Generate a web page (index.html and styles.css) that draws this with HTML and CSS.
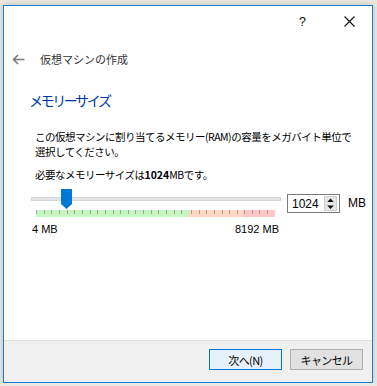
FILE: index.html
```html
<!DOCTYPE html>
<html lang="ja">
<head>
    <meta charset="UTF-8">
    <title>仮想マシンの作成</title>
    <link rel="stylesheet" href="styles.css">
</head>
<body>
    <div class="window">
        <div class="titlebar">
            <span class="help">?</span>
            <svg class="close" width="11" height="11" viewBox="0 0 11 11"><path d="M0.5 0.5 L10.5 10.5 M10.5 0.5 L0.5 10.5" stroke="#111" stroke-width="1.1" fill="none"/></svg>
        </div>
        <div class="nav">
            <svg class="back" width="13" height="11" viewBox="0 0 13 11"><path d="M12.5 5.5 H1.5 M6 1 L1.5 5.5 L6 10" stroke="#7a7a7a" stroke-width="1.6" fill="none"/></svg>
            <span class="nav-title">仮想マシンの作成</span>
        </div>
        <div class="content">
            <h1 class="heading">メモリーサイズ</h1>
            <p class="desc">この仮想マシンに割り当てるメモリー(RAM)の容量をメガバイト単位で<br>選択してください。</p>
            <p class="need">必要なメモリーサイズは<b>1024</b>MBです。</p>
            <div class="slider-row">
                <div class="slider">
                    <div class="track-wrap">
                        <div class="track"></div>
                        <svg class="thumb" width="11" height="20" viewBox="0 0 11 20"><path d="M0 0 H11 V15 L5.5 20 L0 15 Z" fill="#0078d7"/></svg>
                    </div>
                    <div class="ticks">
                        <div class="zone green"></div>
                        <div class="zone orange"></div>
                        <div class="zone red"></div>
                    </div>
                    <div class="scale">
                        <span>4 MB</span>
                        <span>8192 MB</span>
                    </div>
                </div>
                <div class="spin">
                    <span class="spin-value">1024</span>
                    <div class="spin-btns">
                        <svg width="11" height="7" viewBox="0 0 11 7"><path d="M2 5.5 H9 L5.5 1.5 Z" fill="#111"/></svg>
                        <svg width="11" height="7" viewBox="0 0 11 7"><path d="M2 1.5 H9 L5.5 5.5 Z" fill="#111"/></svg>
                    </div>
                </div>
                <span class="unit">MB</span>
            </div>
        </div>
        <div class="footer">
            <button class="btn primary">次へ(N)</button>
            <button class="btn">キャンセル</button>
        </div>
    </div>
</body>
</html>
```

FILE: styles.css
```css
*{
    margin: 0px;
    padding: 0px;
    box-sizing: border-box;
}
body{
    background: #ebe8df;
    font-family: "Noto Sans CJK JP", "Liberation Sans", sans-serif;
    color: #000;
}
.window{
    width: 370px;
    height: 378px;
    margin: 5px 0 0 3px;
    border: 1px solid #1a7bd6;
    background: #fff;
    display: flex;
    flex-direction: column;
    box-shadow: 0 0 6px rgba(0, 0, 0, 0.18);
}
.titlebar{
    height: 30px;
    display: flex;
    align-items: center;
    justify-content: flex-end;
    padding-right: 17px;
}
.help{
    font-family: "Liberation Sans", sans-serif;
    font-size: 13px;
    margin-right: 38px;
    color: #111;
}
.nav{
    margin-top: 11px;
    height: 24px;
    display: flex;
    align-items: center;
    padding-left: 8px;
}
.nav-title{
    margin-left: 15px;
    font-size: 11px;
    color: #333;
}
.content{
    padding-left: 25px;
}
.heading{
    margin-top: 19px;
    font-size: 14px;
    line-height: 20px;
    font-weight: normal;
    color: #0036a8;
    letter-spacing: -2.4px;
}
.desc{
    margin-top: 19px;
    margin-left: 6px;
    font-size: 10.5px;
    line-height: 15px;
    letter-spacing: -0.5px;
}
.need{
    margin-top: 8px;
    margin-left: 6px;
    font-size: 10.5px;
    line-height: 15px;
    letter-spacing: -0.5px;
}
.need b{
    letter-spacing: 0;
}
.slider-row{
    margin-top: 7px;
    display: flex;
    align-items: flex-start;
    margin-left: 2px;
}
.slider{
    width: 250px;
}
.track-wrap{
    position: relative;
    height: 20px;
    display: flex;
    align-items: center;
}
.track{
    width: 100%;
    height: 4px;
    background: #e6e6e6;
    border: 1px solid #d8d8d8;
}
.thumb{
    position: absolute;
    left: 30px;
    top: 0;
}
.ticks{
    margin: 1px 0 0 5px;
    width: 239px;
    height: 7px;
    display: flex;
}
.zone{
    height: 100%;
    background-image: repeating-linear-gradient(90deg, #a39d94 0px, #a39d94 1px, transparent 1px, transparent 7.65px);
    background-size: 100% 4px;
    background-repeat: no-repeat;
    background-position: 0 0;
}
.green{
    width: 153px;
    background-color: #c6f7c3;
}
.orange{
    width: 54px;
    background-color: #ffd8c4;
    background-position: 2px 0;
}
.red{
    width: 32px;
    background-color: #ffc6c6;
    background-position: 1px 0;
}
.scale{
    margin-top: 6px;
    display: flex;
    justify-content: space-between;
    font-family: "Liberation Sans", sans-serif;
    font-size: 11px;
    line-height: 13px;
    padding-left: 1px;
    padding-right: 2px;
}
.spin{
    margin: 5px 0 0 6px;
    width: 53px;
    height: 19px;
    border: 1px solid #7a7a7a;
    display: flex;
    align-items: center;
    justify-content: space-between;
    padding: 0 2px 0 4px;
}
.spin-value{
    font-family: "Liberation Sans", sans-serif;
    font-size: 12px;
}
.spin-btns{
    display: flex;
    flex-direction: column;
    width: 13px;
    height: 15px;
    border: 1px solid #cfcfcf;
    background: #e6e6e6;
    align-items: center;
    justify-content: space-around;
}
.spin-btns svg{
    display: block;
}
.unit{
    margin: 7px 0 0 8px;
    font-family: "Liberation Sans", sans-serif;
    font-size: 12px;
}
.footer{
    margin-top: auto;
    height: 42px;
    border-top: 1px solid #dfdfdf;
    background: #f0f0f0;
    display: flex;
    justify-content: flex-end;
    align-items: flex-start;
    padding: 8px 9px 0 0;
    gap: 8px;
}
.btn{
    width: 73px;
    height: 21px;
    font-family: "Noto Sans CJK JP", sans-serif;
    font-size: 11px;
    letter-spacing: -0.6px;
    background: #e1e1e1;
    border: 1px solid #adadad;
    color: #000;
}
.btn.primary{
    background: #e5f1fb;
    border: 1px solid #0078d7;
}
```
